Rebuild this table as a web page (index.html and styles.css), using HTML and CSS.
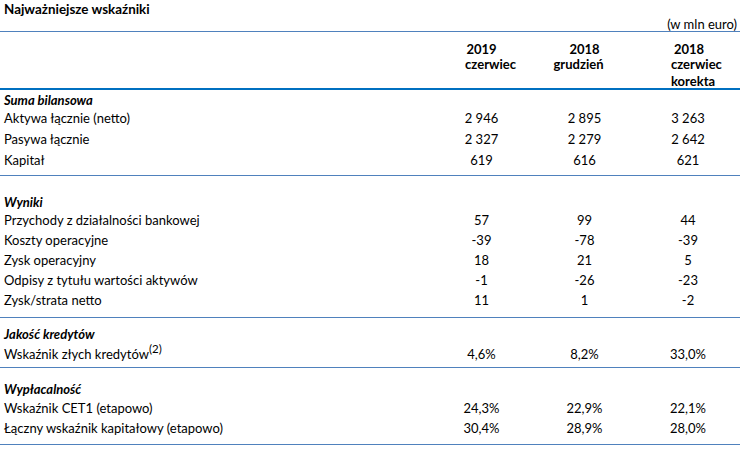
FILE: index.html
```html
<!DOCTYPE html>
<html lang="pl">
<head>
<meta charset="utf-8">
<title>Najważniejsze wskaźniki</title>
<link rel="stylesheet" href="styles.css">
</head>
<body>
<div class="sheet">
  <div class="title">Najważniejsze wskaźniki</div>
  <div class="unit">(w mln euro)</div>
  <div class="head">
    <div></div>
    <div class="hc c1"><span>2019</span><span class="sub">czerwiec</span></div>
    <div class="hc c2"><span>2018</span><span class="sub">grudzień</span></div>
    <div class="hc c3"><span>2018</span><span class="sub">czerwiec</span><span class="sub last">korekta</span></div>
  </div>

  <div class="sec s1">
    <div class="row cap"><div class="lbl">Suma bilansowa</div></div>
    <div class="row wide"><div class="lbl">Aktywa łącznie (netto)</div><div>2 946</div><div>2 895</div><div>3 263</div></div>
    <div class="row wide"><div class="lbl">Pasywa łącznie</div><div>2 327</div><div>2 279</div><div>2 642</div></div>
    <div class="row wide"><div class="lbl">Kapitał</div><div>619</div><div>616</div><div>621</div></div>
  </div>

  <div class="sec s2">
    <div class="row cap"><div class="lbl">Wyniki</div></div>
    <div class="row"><div class="lbl">Przychody z działalności bankowej</div><div>57</div><div>99</div><div>44</div></div>
    <div class="row"><div class="lbl">Koszty operacyjne</div><div>-39</div><div>-78</div><div>-39</div></div>
    <div class="row"><div class="lbl">Zysk operacyjny</div><div>18</div><div>21</div><div>5</div></div>
    <div class="row"><div class="lbl">Odpisy z tytułu wartości aktywów</div><div>-1</div><div>-26</div><div>-23</div></div>
    <div class="row"><div class="lbl">Zysk/strata netto</div><div>11</div><div>1</div><div>-2</div></div>
  </div>

  <div class="sec s3">
    <div class="row cap"><div class="lbl">Jakość kredytów</div></div>
    <div class="row"><div class="lbl">Wskaźnik złych kredytów<sup class="note">(2)</sup></div><div>4,6%</div><div>8,2%</div><div>33,0%</div></div>
  </div>

  <div class="sec s4">
    <div class="row cap"><div class="lbl">Wypłacalność</div></div>
    <div class="row"><div class="lbl">Wskaźnik CET1 (etapowo)</div><div>24,3%</div><div>22,9%</div><div>22,1%</div></div>
    <div class="row"><div class="lbl">Łączny wskaźnik kapitałowy (etapowo)</div><div>30,4%</div><div>28,9%</div><div>28,0%</div></div>
  </div>
</div>
</body>
</html>
```
FILE: styles.css
```css
html, body {
  margin: 0;
  padding: 0;
  background: #ffffff;
}

body {
  font-family: "Lato", "Liberation Sans", sans-serif;
  font-size: 13px;
  color: #000000;
}

.sheet {
  width: 740px;
}

.title {
  height: 17px;
  line-height: 18px;
  padding-left: 4px;
  font-weight: bold;
  font-size: 13.4px;
}

.unit {
  height: 14px;
  line-height: 14px;
  text-align: right;
  padding-right: 3px;
  border-bottom: 1px solid #4f81bd;
}

.head {
  display: grid;
  grid-template-columns: 430px 103px 103px 104px;
  height: 46px;
  padding-top: 10px;
  border-bottom: 2px solid #0070c0;
  font-weight: bold;
}

.hc {
  display: flex;
  flex-direction: column;
  align-items: center;
  line-height: 15px;
}

.c1 .sub { padding-left: 18px; }
.c2 .sub { padding-right: 12px; }
.c3 { align-items: flex-start; padding-left: 38px; }
.c3 .sub { margin-left: -3px; }
.c3 .last { line-height: 19px; }

.sec {
  border-bottom: 1px solid #4f81bd;
}

.s1 { padding-top: 2px; padding-bottom: 4px; }
.s2 { padding-top: 17px; padding-bottom: 7px; }
.s3 { padding-top: 6px; padding-bottom: 3px; }
.s4 { padding-top: 10px; padding-bottom: 6px; }

.row {
  display: grid;
  grid-template-columns: 430px 103px 103px 104px;
  height: 20px;
  line-height: 20px;
  text-align: center;
  white-space: nowrap;
}

.row.wide {
  height: 21px;
  line-height: 21px;
}

.row.cap {
  font-weight: bold;
  font-style: italic;
}

.s1 .row.cap {
  height: 16px;
  line-height: 16px;
}

.s2 .row.cap {
  height: 17px;
  line-height: 19px;
}

.s4 .row.cap {
  line-height: 22px;
}

.lbl {
  text-align: left;
  padding-left: 4px;
}

.note {
  font-size: 11.5px;
  line-height: 0;
  vertical-align: 6px;
}
```
